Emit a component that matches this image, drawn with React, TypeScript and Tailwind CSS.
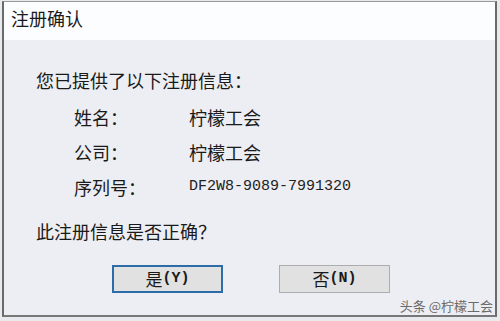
const cjk = { fontFamily: '"SimSun", "Noto Sans CJK SC", sans-serif' };

export default function App() {
  return (
    <div className="h-[321px] w-[500px] overflow-hidden bg-[#e9eaee] pl-[2px] pr-[3px] pt-[1px] pb-[4px]">
      <div className="flex h-full flex-col border-x-2 border-b-2 border-t border-x-[#6a6a6a] border-b-[#777] border-t-[#9a9a9a]">
        <div className="flex h-[38px] items-center bg-[#fcfdff] pb-[5px] pl-[7px] text-[18px] text-[#1a1a1a]" style={cjk}>
          注册确认
        </div>
        <div className="relative flex flex-1 flex-col bg-[#edeef3] pl-[32px] text-[#1a1a1a]" style={cjk}>
          <div className="mt-[22px] flex h-[36px] items-center text-[18px]">您已提供了以下注册信息：</div>
          <div className="ml-[38px] mt-[2px] flex flex-col text-[18px]">
            <Row label="姓名：" value="柠檬工会" />
            <Row label="公司：" value="柠檬工会" />
            <div className="flex h-[35px] items-center">
              <span className="w-[115px]">序列号：</span>
              <span className="text-[15px] text-[#222]" style={{ fontFamily: '"Liberation Mono", monospace' }}>
                DF2W8-9089-7991320
              </span>
            </div>
          </div>
          <div className="mt-[8px] flex h-[36px] items-center text-[18px]">此注册信息是否正确？</div>
          <div className="mt-[16px] flex gap-[56px] pl-[76px]">
            <button className="flex h-[28px] w-[111px] items-center justify-center border-2 border-[#2c6ca8] bg-[#e1e1e1] text-[17px]">
              是<span style={{ fontFamily: '"Liberation Mono", monospace' }} className="text-[15px] font-bold">(Y)</span>
            </button>
            <button className="flex h-[28px] w-[111px] items-center justify-center border border-[#adadad] bg-[#e1e1e1] text-[17px]">
              否<span style={{ fontFamily: '"Liberation Mono", monospace' }} className="text-[15px] font-bold">(N)</span>
            </button>
          </div>
          <div className="absolute bottom-[0px] right-[2px] text-[13px] text-[#6a6a6a]">头条 @柠檬工会</div>
        </div>
      </div>
    </div>
  );
}

function Row({ label, value }: { label: string; value: string }) {
  return (
    <div className="flex h-[35px] items-center">
      <span className="w-[115px]">{label}</span>
      <span>{value}</span>
    </div>
  );
}
